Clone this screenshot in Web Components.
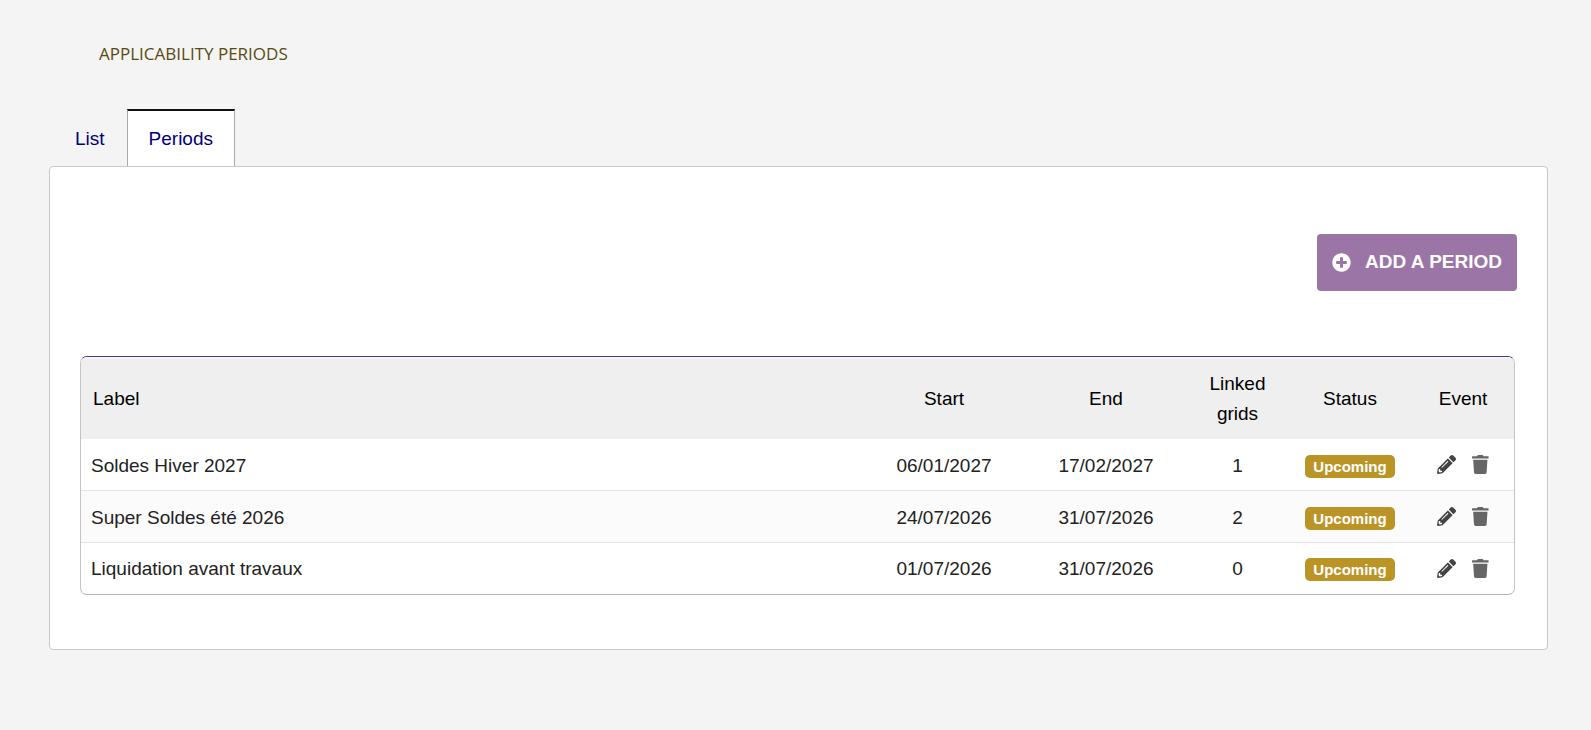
<!DOCTYPE html>
<html lang="en">
<head>
<meta charset="utf-8">
<meta name="viewport" content="width=device-width, initial-scale=1">
<title>Applicability periods</title>
<style>
    :root {
        --page-color: #f4f4f4;
        --panel-border: #c8c8c8;
        --link-color: #00007a;
        --button-color: #9c75a7;
        --badge-color: #bb9426;
    }
    body {
        margin: 0;
        background: var(--page-color);
        font: 19px/30px "Liberation Sans", Arial, sans-serif;
        color: #222;
    }
</style>
</head>
<body>
<periods-page>
    <span slot="title">Applicability periods</span>
    <tab-bar slot="tabs">
        <tab-link href="#list">List</tab-link>
        <tab-link href="#periods" active>Periods</tab-link>
    </tab-bar>
    <add-button slot="action">Add a period</add-button>
    <period-table></period-table>
</periods-page>

<script>
const ICONS = {
    plus: {
        box: '0 0 512 512',
        path: 'M256 8C119 8 8 119 8 256s111 248 248 248 248-111 248-248S393 8 256 8zm144 276c0 6.6-5.4 12-12 12h-92v92c0 6.6-5.4 12-12 12h-56c-6.6 0-12-5.4-12-12v-92h-92c-6.6 0-12-5.4-12-12v-56c0-6.6 5.4-12 12-12h92v-92c0-6.6 5.4-12 12-12h56c6.6 0 12 5.4 12 12v92h92c6.6 0 12 5.4 12 12v56z'
    },
    pencil: {
        box: '0 0 512 512',
        path: 'M497.9 142.1l-46.1 46.1c-4.7 4.7-12.3 4.7-17 0l-111-111c-4.7-4.7-4.7-12.3 0-17l46.1-46.1c18.7-18.7 49.1-18.7 67.9 0l60.1 60.1c18.8 18.7 18.8 49.1 0 67.9zM284.2 99.8L21.6 362.4.4 483.9c-2.9 16.4 11.4 30.6 27.8 27.8l121.5-21.3 262.6-262.6c4.7-4.7 4.7-12.3 0-17l-111-111c-4.8-4.7-12.4-4.7-17.1 0zM124.1 339.9c-5.5-5.5-5.5-14.3 0-19.8l154-154c5.5-5.5 14.3-5.5 19.8 0s5.5 14.3 0 19.8l-154 154c-5.5 5.5-14.3 5.5-19.8 0zM88 424h48v36.3l-64.5 11.3-31.1-31.1L51.7 376H88v48z'
    },
    trash: {
        box: '0 0 448 512',
        path: 'M432 32H312l-9.4-18.7A24 24 0 0 0 281.1 0H166.8a23.72 23.72 0 0 0-21.4 13.3L136 32H16A16 16 0 0 0 0 48v32a16 16 0 0 0 16 16h416a16 16 0 0 0 16-16V48a16 16 0 0 0-16-16zM53.2 467a48 48 0 0 0 47.9 45h245.8a48 48 0 0 0 47.9-45L416 128H32z'
    }
};

const PERIODS = [
    { label: 'Soldes Hiver 2027', start: '06/01/2027', end: '17/02/2027', grids: 1, status: 'Upcoming' },
    { label: 'Super Soldes été 2026', start: '24/07/2026', end: '31/07/2026', grids: 2, status: 'Upcoming' },
    { label: 'Liquidation avant travaux', start: '01/07/2026', end: '31/07/2026', grids: 0, status: 'Upcoming' }
];

class UiIcon extends HTMLElement {
    constructor() {
        super();
        this.attachShadow({ mode: 'open' });
    }

    connectedCallback() {
        const icon = ICONS[this.getAttribute('name')];
        this.shadowRoot.innerHTML = `
            <style>
                :host { display: block; height: 19px; }
                svg { display: block; height: 100%; fill: currentColor; }
            </style>
            <svg viewBox="${icon.box}" aria-hidden="true"><path d="${icon.path}"/></svg>
        `;
    }
}

class StatusBadge extends HTMLElement {
    constructor() {
        super();
        this.attachShadow({ mode: 'open' });
        this.shadowRoot.innerHTML = `
            <style>
                :host {
                    display: inline-block;
                    vertical-align: middle;
                    padding: 0 8px;
                    border-radius: 5px;
                    background: var(--badge-color);
                    color: #fff;
                    font-size: 15px;
                    font-weight: bold;
                    line-height: 23px;
                }
            </style>
            <slot></slot>
        `;
    }
}

class AddButton extends HTMLElement {
    constructor() {
        super();
        this.attachShadow({ mode: 'open' });
        this.shadowRoot.innerHTML = `
            <style>
                :host { display: block; }
                button {
                    display: flex;
                    align-items: center;
                    gap: 14px;
                    padding: 13px 15px 14px;
                    border: 0;
                    border-radius: 4px;
                    background: var(--button-color);
                    color: #fff;
                    font: inherit;
                    font-weight: bold;
                    text-transform: uppercase;
                    cursor: pointer;
                }
            </style>
            <button type="button"><ui-icon name="plus"></ui-icon><slot></slot></button>
        `;
    }
}

class TabLink extends HTMLElement {
    constructor() {
        super();
        this.attachShadow({ mode: 'open' });
    }

    connectedCallback() {
        const current = this.hasAttribute('active') ? 'aria-current="page"' : '';
        this.shadowRoot.innerHTML = `
            <style>
                :host { display: block; }
                a {
                    display: block;
                    padding: 13px 21px 12px;
                    border: 1px solid transparent;
                    border-top-width: 2px;
                    border-bottom: 0;
                    color: var(--link-color);
                    text-decoration: none;
                }
                :host([active]) a {
                    background: #fff;
                    border-color: #111 #aaa;
                }
            </style>
            <a href="${this.getAttribute('href')}" ${current}><slot></slot></a>
        `;
    }
}

class TabBar extends HTMLElement {
    constructor() {
        super();
        this.attachShadow({ mode: 'open' });
        this.shadowRoot.innerHTML = `
            <style>
                :host { display: block; }
                nav { display: flex; padding-left: 4px; }
            </style>
            <nav><slot></slot></nav>
        `;
    }
}

class PeriodTable extends HTMLElement {
    constructor() {
        super();
        this.attachShadow({ mode: 'open' });
    }

    connectedCallback() {
        const rows = PERIODS.map(p => `
            <tr>
                <td>${p.label}</td>
                <td>${p.start}</td>
                <td>${p.end}</td>
                <td>${p.grids}</td>
                <td><status-badge>${p.status}</status-badge></td>
                <td>
                    <div class="actions">
                        <button type="button" class="edit" aria-label="Edit ${p.label}"><ui-icon name="pencil"></ui-icon></button>
                        <button type="button" class="delete" aria-label="Delete ${p.label}"><ui-icon name="trash"></ui-icon></button>
                    </div>
                </td>
            </tr>
        `).join('');

        this.shadowRoot.innerHTML = `
            <style>
                * { box-sizing: border-box; }
                :host {
                    display: block;
                    overflow: hidden;
                    border: 1px solid #c4c4c4;
                    border-top-color: #53327a;
                    border-bottom-color: #b4b4b4;
                    border-radius: 7px;
                    margin-right: 2px;
                }
                table {
                    width: 100%;
                    table-layout: fixed;
                    border-collapse: separate;
                    border-spacing: 0;
                }
                .date { width: 162px; }
                .grids { width: 101px; }
                .status { width: 124px; }
                .event { width: 102px; }
                th, td {
                    text-align: center;
                    vertical-align: middle;
                }
                th {
                    padding: 11px 20px 10px;
                    border-top: 1px solid #fafafa;
                    background: #efefef;
                    color: #000;
                    font-weight: normal;
                }
                th:first-child {
                    padding-left: 12px;
                    text-align: left;
                }
                td {
                    height: 52px;
                    padding: 2px 0 0;
                    border-bottom: 1px solid #e4e4e4;
                }
                td:first-child {
                    padding-left: 10px;
                    text-align: left;
                }
                td:last-child { padding-top: 0; }
                tr:nth-child(even) td { background: #fbfbfb; }
                tr:last-child td {
                    height: 51px;
                    padding-top: 0;
                    border-bottom: 0;
                }
                .actions {
                    display: flex;
                    justify-content: center;
                    gap: 16px;
                }
                button {
                    padding: 0;
                    border: 0;
                    background: none;
                    cursor: pointer;
                }
                .edit { color: #444; }
                .delete { color: #666; }
            </style>
            <table>
                <thead>
                    <tr>
                        <th scope="col">Label</th>
                        <th scope="col" class="date">Start</th>
                        <th scope="col" class="date">End</th>
                        <th scope="col" class="grids">Linked grids</th>
                        <th scope="col" class="status">Status</th>
                        <th scope="col" class="event">Event</th>
                    </tr>
                </thead>
                <tbody>${rows}</tbody>
            </table>
        `;
    }
}

class PeriodsPage extends HTMLElement {
    constructor() {
        super();
        this.attachShadow({ mode: 'open' });
        this.shadowRoot.innerHTML = `
            <style>
                :host {
                    display: block;
                    padding: 39px 43px 39px 49px;
                }
                h1 {
                    margin: 0 0 40px;
                    padding-left: 50px;
                    color: #584b10;
                    font: 17px/30px "Open Sans", "Noto Sans", sans-serif;
                    text-transform: uppercase;
                }
                main {
                    padding: 67px 30px 54px;
                    border: 1px solid var(--panel-border);
                    border-radius: 4px;
                    background: #fff;
                }
                .toolbar {
                    display: flex;
                    justify-content: flex-end;
                    margin-bottom: 65px;
                }
            </style>
            <h1><slot name="title"></slot></h1>
            <slot name="tabs"></slot>
            <main>
                <div class="toolbar"><slot name="action"></slot></div>
                <slot></slot>
            </main>
        `;
    }
}

customElements.define('ui-icon', UiIcon);
customElements.define('status-badge', StatusBadge);
customElements.define('add-button', AddButton);
customElements.define('tab-link', TabLink);
customElements.define('tab-bar', TabBar);
customElements.define('period-table', PeriodTable);
customElements.define('periods-page', PeriodsPage);
</script>
</body>
</html>
